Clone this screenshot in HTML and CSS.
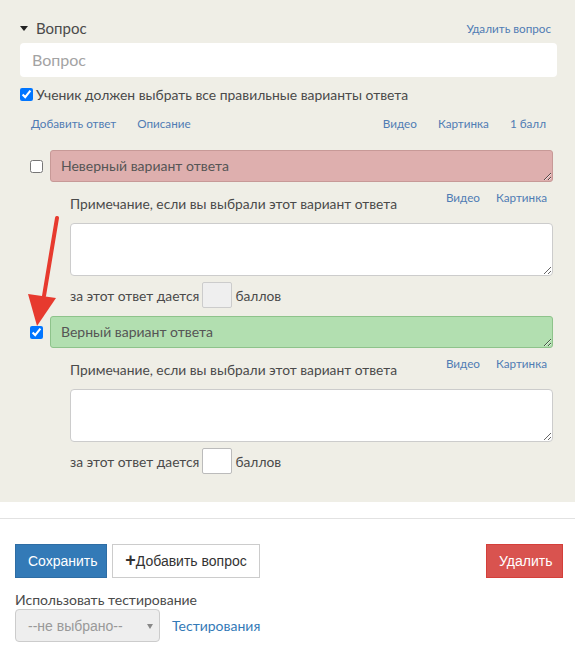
FILE: index.html
```html
<!DOCTYPE html>
<html lang="ru">
<head>
<meta charset="utf-8">
<link rel="stylesheet" href="styles.css">
</head>
<body>
<div class="panel">
  <div class="q-head">
    <div class="q-title"><span class="caret"></span>Вопрос</div>
    <a class="link">Удалить вопрос</a>
  </div>
  <input class="q-input" type="text" placeholder="Вопрос">
  <label class="all-correct"><input type="checkbox" checked>Ученик должен выбрать все правильные варианты ответа</label>
  <div class="q-links">
    <div class="group"><a class="link">Добавить ответ</a><a class="link">Описание</a></div>
    <div class="group"><a class="link">Видео</a><a class="link">Картинка</a><a class="link">1 балл</a></div>
  </div>

  <div class="answer">
    <div class="answer-row">
      <input class="ans-check" type="checkbox">
      <textarea class="ans wrong">Неверный вариант ответа</textarea>
    </div>
    <div class="note">
      <div class="note-head">
        <span class="note-label">Примечание, если вы выбрали этот вариант ответа</span>
        <div class="note-links"><a class="link">Видео</a><a class="link">Картинка</a></div>
      </div>
      <textarea class="note-text"></textarea>
      <div class="points">за этот ответ дается <input class="pts grey" type="text"> баллов</div>
    </div>
  </div>

  <div class="answer">
    <div class="answer-row">
      <input class="ans-check" type="checkbox" checked>
      <textarea class="ans right">Верный вариант ответа</textarea>
    </div>
    <div class="note">
      <div class="note-head">
        <span class="note-label">Примечание, если вы выбрали этот вариант ответа</span>
        <div class="note-links"><a class="link">Видео</a><a class="link">Картинка</a></div>
      </div>
      <textarea class="note-text"></textarea>
      <div class="points">за этот ответ дается <input class="pts" type="text"> баллов</div>
    </div>
  </div>

  <svg class="arrow" width="70" height="130" viewBox="0 0 70 130">
    <line x1="57" y1="2" x2="44" y2="80" stroke="#e73a2e" stroke-width="4" stroke-linecap="round"/>
    <polygon points="28,78 56,82 37,110" fill="#e73a2e"/>
  </svg>
</div>
<div class="divider"></div>
<div class="footer">
  <div class="buttons">
    <div class="left">
      <button class="btn primary">Сохранить</button>
      <button class="btn default"><span class="plus">+</span>Добавить вопрос</button>
    </div>
    <button class="btn danger">Удалить</button>
  </div>
  <div class="test-label">Использовать тестирование</div>
  <div class="test-row">
    <div class="select">--не выбрано--<span class="sel-caret"></span></div>
    <a class="blue-link">Тестирования</a>
  </div>
</div>
</body>
</html>
```
FILE: styles.css
```css
html, body {
  margin: 0;
  padding: 0;
  background: #fff;
}
body {
  font-family: Lato, "Open Sans", sans-serif;
  color: #555;
  font-size: 14px;
}
.panel {
  position: relative;
  background: #efeee6;
  padding: 18px 18px 0 20px;
  height: 484px;
}
.link {
  color: #4f7cb4;
  font-size: 11.7px;
}
.q-head {
  display: flex;
  justify-content: space-between;
  align-items: center;
  height: 20px;
  padding-right: 6px;
}
.q-title {
  display: flex;
  align-items: center;
  font-size: 15px;
  color: #4a4a4a;
}
.caret {
  width: 0;
  height: 0;
  border-left: 4px solid transparent;
  border-right: 4px solid transparent;
  border-top: 5px solid #222;
  margin-right: 8px;
}
.q-input {
  display: block;
  box-sizing: border-box;
  width: 537px;
  height: 34px;
  margin-top: 5px;
  border: none;
  border-radius: 4px;
  background: #fff;
  padding: 0 12px 2px;
  font: 16px Lato, "Open Sans", sans-serif;
}
.q-input::placeholder { color: #a3a3a3; }
.all-correct {
  display: flex;
  align-items: center;
  margin-top: 9px;
  height: 16px;
  color: #4a4a4a;
  font-size: 13.9px;
}
.all-correct input {
  margin: 0 3px 0 0;
  width: 13px;
  height: 13px;
}
.q-links {
  display: flex;
  justify-content: space-between;
  padding: 0 11px 0 11px;
  margin-top: 13px;
  height: 16px;
  align-items: center;
}
.q-links .group {
  display: flex;
  gap: 21px;
}
.answer {
  margin-top: 19px;
}
.answer + .answer { margin-top: 8px; }
.answer-row {
  display: flex;
  align-items: center;
  gap: 7px;
  padding-left: 10px;
}
.ans-check {
  margin: 0;
  width: 13px;
  height: 13px;
}
.ans {
  box-sizing: border-box;
  width: 503px;
  height: 32px;
  border-radius: 3px;
  padding: 6px 10px;
  font: 14px Lato, "Open Sans", sans-serif;
  color: #555;
  resize: vertical;
  overflow: hidden;
  display: block;
}
.ans.wrong {
  background: #deafae;
  border: 1px solid #c79997;
}
.ans.right {
  background: #b2dfb0;
  border: 1px solid #8ec38b;
}
.note {
  padding-left: 50px;
}
.note-head {
  display: flex;
  justify-content: space-between;
  align-items: flex-start;
  height: 41px;
  padding-right: 10px;
}
.note-label {
  margin-top: 13px;
  color: #4a4a4a;
  font-size: 13.8px;
}
.note-links {
  display: flex;
  gap: 16px;
  margin-top: 8px;
}
.note-text {
  display: block;
  box-sizing: border-box;
  width: 483px;
  height: 53px;
  border: 1px solid #ccc;
  border-radius: 4px;
  background: #fff;
  resize: vertical;
}
.points {
  display: flex;
  align-items: center;
  gap: 3px;
  margin-top: 6px;
  color: #4a4a4a;
  font-size: 13.8px;
}
.pts {
  box-sizing: border-box;
  width: 30px;
  height: 26px;
  border: 1px solid #bbb;
  border-radius: 2px;
  background: #fff;
  padding: 0;
}
.pts.grey {
  background: #efefef;
  border-color: #ccc;
}
.arrow {
  position: absolute;
  left: 0;
  top: 216px;
}
.divider {
  height: 16px;
  border-bottom: 1px solid #e2e2e2;
}
.footer {
  padding: 25px 12px 0 15px;
}
.buttons {
  display: flex;
  justify-content: space-between;
}
.buttons .left {
  display: flex;
  gap: 5px;
}
.btn {
  height: 34px;
  font: 14px "Liberation Sans", Arial, sans-serif;
  padding: 0 12px;
  border-radius: 0;
  cursor: pointer;
}
.btn.primary {
  background: #337ab7;
  border: 1px solid #2e6da4;
  color: #fff;
  width: 92px;
}
.btn.default {
  background: #fff;
  border: 1px solid #ccc;
  color: #333;
  width: 148px;
}
.plus {
  font-weight: bold;
  font-size: 18px;
  line-height: 14px;
}
.btn.danger {
  background: #d9534f;
  border: 1px solid #d43f3a;
  color: #fff;
  width: 77px;
}
.test-label {
  margin-top: 13px;
  font-size: 14px;
  color: #4a4a4a;
  height: 18px;
}
.test-row {
  display: flex;
  align-items: center;
  gap: 12px;
}
.select {
  position: relative;
  box-sizing: border-box;
  width: 145px;
  height: 33px;
  border: 1px solid #ccc;
  border-radius: 4px;
  background: #eee;
  color: #999;
  font: 14px "Liberation Sans", Arial, sans-serif;
  display: flex;
  align-items: center;
  padding-left: 12px;
}
.sel-caret {
  position: absolute;
  right: 6px;
  top: 14px;
  border-left: 3px solid transparent;
  border-right: 3px solid transparent;
  border-top: 5px solid #888;
}
.blue-link {
  color: #337ab7;
  font-size: 14px;
}
```
